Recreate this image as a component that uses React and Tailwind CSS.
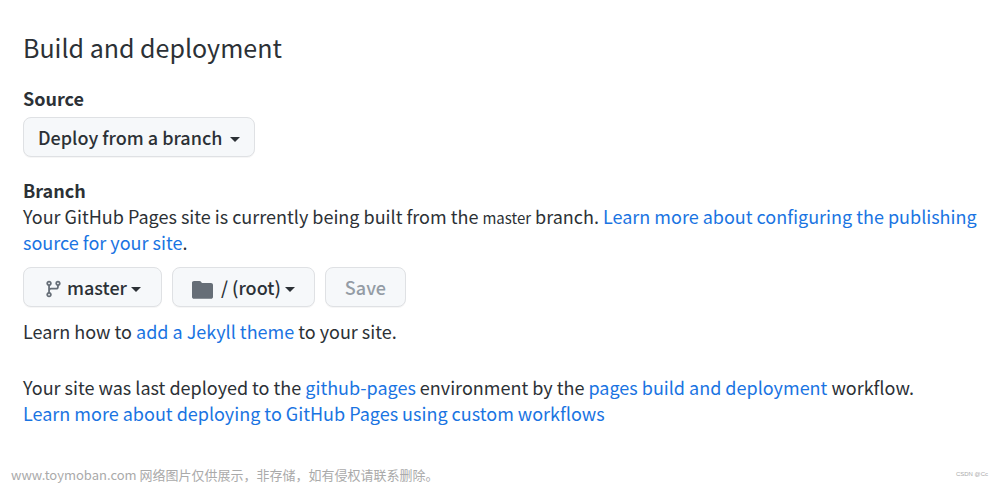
function LinkText({ children }) {
  return (
    <a href="#" className="text-[#1a74e2] hover:underline">
      {children}
    </a>
  );
}

function Caret() {
  return (
    <svg className="mt-1" width="10" height="5" viewBox="0 0 10 5" fill="currentColor" aria-hidden="true">
      <path d="M0 0h10L5 5z" />
    </svg>
  );
}

function BranchIcon() {
  return (
    <svg className="mt-1" width="19" height="20" viewBox="0 0 16 16" fill="#666e77" aria-hidden="true">
      <path
        fillRule="evenodd"
        d="M11.75 2.5a.75.75 0 100 1.5.75.75 0 000-1.5zm-2.25.75a2.25 2.25 0 113 2.122V6A2.5 2.5 0 0110 8.5H6a1 1 0 00-1 1v1.128a2.251 2.251 0 11-1.5 0V5.372a2.25 2.25 0 111.5 0v1.836A2.492 2.492 0 016 7h4a1 1 0 001-1v-.628A2.25 2.25 0 019.5 3.25zM4.25 12a.75.75 0 100 1.5.75.75 0 000-1.5zM3.5 3.25a.75.75 0 111.5 0 .75.75 0 01-1.5 0z"
      />
    </svg>
  );
}

function FolderIcon() {
  return (
    <svg className="mt-1" width="21" height="19" viewBox="0 0 21 19" fill="#666e77" aria-hidden="true">
      <path d="M2 1h5.500c.8 0 1.300.3 1.700.9l.5.8c.2.300.5.400.8.400H19c1.100 0 2 .8 2 1.900v12c0 1-.9 1.800-2 1.800H2c-1.100 0-2-.8-2-1.800V2.800C0 1.800.9 1 2 1z" />
    </svg>
  );
}

const buttonStyle =
  "flex h-10 items-center rounded-lg border border-[#dfe1e4] bg-[#f6f8fa] font-medium whitespace-nowrap shadow-[0_1px_0_rgba(27,31,36,0.04)]";

function App() {
  return (
    <div className="flex min-h-screen flex-col bg-white font-['Noto_Sans_CJK_SC','Noto_Sans',sans-serif] text-lg text-[#2c3136]">
      <main className="flex-1 pt-[31px] pr-3 pl-[23px]">
        <h2 className="text-[25px] leading-8">Build and deployment</h2>

        {/* Source */}
        <h3 className="mt-6 leading-[22px] font-bold">Source</h3>
        <button type="button" className={`${buttonStyle} mt-2 gap-2 px-[14px]`}>
          Deploy from a branch
          <Caret />
        </button>

        {/* Branch */}
        <h3 className="mt-5 leading-[26px] font-bold">Branch</h3>
        <p className="leading-[26px]">
          Your GitHub Pages site is currently being built from the{" "}
          <span className="text-[15px] leading-none">master</span> branch.{" "}
          <LinkText>Learn more about configuring the publishing source for your site</LinkText>.
        </p>
        <div className="mt-3 flex gap-[10px]">
          <button type="button" className={`${buttonStyle} gap-1 px-5`}>
            <BranchIcon />
            master
            <Caret />
          </button>
          <button type="button" className={`${buttonStyle} gap-1 px-[19px]`}>
            <FolderIcon />
            <span className="ml-1">/ (root)</span>
            <Caret />
          </button>
          <button type="button" disabled className={`${buttonStyle} px-[19px] text-[#949ca5]`}>
            Save
          </button>
        </div>
        <p className="mt-[11px] leading-[26px]">
          Learn how to <LinkText>add a Jekyll theme</LinkText> to your site.
        </p>

        {/* Last deployment */}
        <p className="mt-[30px] leading-[26px]">
          Your site was last deployed to the <LinkText>github-pages</LinkText> environment by the{" "}
          <LinkText>pages build and deployment</LinkText> workflow.
          <br />
          <LinkText>Learn more about deploying to GitHub Pages using custom workflows</LinkText>
        </p>
      </main>

      <footer className="flex items-center justify-between pr-3 pl-[11px] text-[#aaaaaa]">
        <p className="text-[13px] leading-5">www.toymoban.com 网络图片仅供展示，非存储，如有侵权请联系删除。</p>
        <span className="font-['Liberation_Sans',sans-serif] text-[6px]">CSDN @Cc</span>
      </footer>
    </div>
  );
}

export default App;
